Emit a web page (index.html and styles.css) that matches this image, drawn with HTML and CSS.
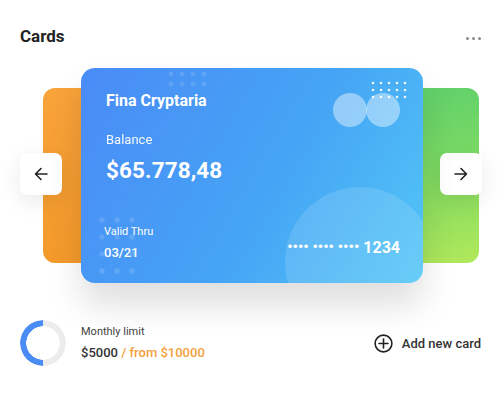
FILE: index.html
```html
<!DOCTYPE html>
<html>
<head>
<meta charset="utf-8">
<link rel="stylesheet" href="styles.css">
</head>
<body>
<div class="widget">
  <div class="header">
    <h2 class="title">Cards</h2>
    <div class="more"><span></span><span></span><span></span></div>
  </div>
  <div class="carousel">
    <div class="back back-orange"></div>
    <div class="back back-green"></div>
    <div class="card">
      <svg class="deco" width="342" height="215" viewBox="0 0 342 215">
        <circle cx="279" cy="194" r="75" fill="#ffffff" fill-opacity="0.13"/>
        <circle cx="269" cy="42" r="17" fill="#ffffff" fill-opacity="0.42"/>
        <circle cx="302" cy="42" r="17" fill="#ffffff" fill-opacity="0.42"/>
        <g fill="#ffffff" fill-opacity="0.9">
          <circle cx="292" cy="15" r="1.3"/><circle cx="300" cy="15" r="1.3"/><circle cx="308" cy="15" r="1.3"/><circle cx="316" cy="15" r="1.3"/><circle cx="324" cy="15" r="1.3"/>
          <circle cx="292" cy="22" r="1.3"/><circle cx="300" cy="22" r="1.3"/><circle cx="308" cy="22" r="1.3"/><circle cx="316" cy="22" r="1.3"/><circle cx="324" cy="22" r="1.3"/>
          <circle cx="292" cy="29" r="1.3"/><circle cx="300" cy="29" r="1.3"/><circle cx="308" cy="29" r="1.3"/><circle cx="316" cy="29" r="1.3"/><circle cx="324" cy="29" r="1.3"/>
        </g>
        <g fill="#ffffff" fill-opacity="0.12">
          <circle cx="90" cy="6" r="2.5"/><circle cx="101" cy="6" r="2.5"/><circle cx="112" cy="6" r="2.5"/><circle cx="123" cy="6" r="2.5"/>
          <circle cx="90" cy="16" r="2.5"/><circle cx="101" cy="16" r="2.5"/><circle cx="112" cy="16" r="2.5"/><circle cx="123" cy="16" r="2.5"/>
        </g>
        <g fill="#ffffff" fill-opacity="0.14">
          <circle cx="21" cy="152" r="2.7"/><circle cx="36" cy="152" r="2.7"/><circle cx="51" cy="152" r="2.7"/>
          <circle cx="21" cy="169" r="2.7"/><circle cx="36" cy="169" r="2.7"/><circle cx="51" cy="169" r="2.7"/>
          <circle cx="21" cy="186" r="2.7"/><circle cx="36" cy="186" r="2.7"/><circle cx="51" cy="186" r="2.7"/>
          <circle cx="21" cy="203" r="2.7"/><circle cx="36" cy="203" r="2.7"/><circle cx="51" cy="203" r="2.7"/>
        </g>
      </svg>
      <div class="card-top">
        <div class="holder">Fina Cryptaria</div>
        <div class="label">Balance</div>
        <div class="amount">$65.778,48</div>
      </div>
      <div class="card-bottom">
        <div class="valid">
          <div class="valid-label">Valid Thru</div>
          <div class="valid-date">03/21</div>
        </div>
        <div class="number"><span class="mask">•••• •••• ••••</span> 1234</div>
      </div>
    </div>
    <button class="arrow arrow-left" aria-label="Previous">
      <svg width="14" height="14" viewBox="0 0 14 14"><path d="M13 7H1.5M7 1.5L1.5 7L7 12.5" fill="none" stroke="#222" stroke-width="1.6" stroke-linecap="round" stroke-linejoin="round"/></svg>
    </button>
    <button class="arrow arrow-right" aria-label="Next">
      <svg width="14" height="14" viewBox="0 0 14 14"><path d="M1 7H12.5M7 1.5L12.5 7L7 12.5" fill="none" stroke="#222" stroke-width="1.6" stroke-linecap="round" stroke-linejoin="round"/></svg>
    </button>
  </div>
  <div class="footer">
    <div class="limit">
      <div class="donut"></div>
      <div class="limit-text">
        <div class="limit-label">Monthly limit</div>
        <div class="limit-value"><b>$5000</b> <span class="from">/ from $10000</span></div>
      </div>
    </div>
    <div class="add">
      <svg width="19" height="19" viewBox="0 0 19 19"><circle cx="9.5" cy="9.5" r="8.4" fill="none" stroke="#222" stroke-width="1.6"/><path d="M9.5 5V14M5 9.5H14" stroke="#222" stroke-width="1.6" stroke-linecap="round"/></svg>
      <span>Add new card</span>
    </div>
  </div>
</div>
</body>
</html>
```
FILE: styles.css
```css
* { box-sizing: border-box; }
html, body { margin: 0; padding: 0; background: #ffffff; }
body { font-family: Roboto, "Liberation Sans", Arial, sans-serif; color: #222; }
.widget { width: 500px; height: 400px; padding: 24px 18px 0 20px; }
.header { display: flex; justify-content: space-between; align-items: center; height: 24px; }
.title { margin: 0; font-size: 17px; font-weight: 700; color: #222; }
.more { display: flex; gap: 3px; padding-right: 1px; margin-top: 4px; }
.more span { width: 3px; height: 3px; border-radius: 50%; background: #8a8a8a; }
.carousel { display: grid; margin-top: 20px; height: 215px; }
.carousel > * { grid-area: 1 / 1; }
.back { align-self: center; height: 175px; border-radius: 12px; }
.back-orange { justify-self: start; margin-left: 23px; width: 120px; background: linear-gradient(160deg, #f8a33b, #f39827); }
.back-green { justify-self: end; margin-right: 3px; width: 120px; background: linear-gradient(170deg, #5ccf6c 0%, #7fdb62 50%, #b1e85a 100%); }
.card { position: relative; justify-self: start; margin-left: 61px; width: 342px; height: 215px; border-radius: 14px; overflow: hidden; background: linear-gradient(120deg, #4a8bf6 0%, #45a4f5 55%, #52c6f6 100%); box-shadow: 0 22px 34px rgba(0,0,0,0.13); color: #fff; display: flex; flex-direction: column; justify-content: space-between; padding: 22px 23px 22px 23px; }
.deco { position: absolute; left: 0; top: 0; }
.card-top, .card-bottom { position: relative; }
.card-top { padding-left: 2px; }
.holder { font-size: 16px; font-weight: 700; line-height: 22px; }
.label { font-size: 13px; line-height: 16px; margin-top: 20px; opacity: 0.95; }
.amount { font-size: 22.5px; font-weight: 700; line-height: 28px; margin-top: 8px; letter-spacing: 0.1px; }
.card-bottom { display: flex; justify-content: space-between; align-items: flex-end; }
.valid-label { font-size: 11px; line-height: 14px; }
.valid-date { font-size: 13px; font-weight: 500; line-height: 16px; margin-top: 6px; }
.number { font-size: 16px; font-weight: 700; line-height: 22px; margin-bottom: 2px; }
.mask { font-size: 15px; letter-spacing: 0; vertical-align: 1px; }
.arrow { align-self: center; width: 42px; height: 42px; border: none; border-radius: 7px; background: #fff; box-shadow: 0 6px 22px rgba(0,0,0,0.09); display: flex; align-items: center; justify-content: center; padding: 0; margin-top: -3px; }
.arrow-left { justify-self: start; }
.arrow-right { justify-self: end; }
.footer { display: flex; justify-content: space-between; align-items: center; margin-top: 37px; }
.limit { display: flex; align-items: center; gap: 15px; }
.donut { width: 46px; height: 46px; border-radius: 50%; background: conic-gradient(#ececec 0 50%, #4a8cf4 50% 100%); -webkit-mask: radial-gradient(circle, transparent 16.5px, #000 17px); mask: radial-gradient(circle, transparent 16.5px, #000 17px); }
.limit-label { font-size: 11px; color: #444; line-height: 14px; }
.limit-value { font-size: 13px; line-height: 16px; margin-top: 6px; }
.limit-value b { font-weight: 500; color: #333; }
.from { color: #f4a03c; font-weight: 500; }
.add { display: flex; align-items: center; gap: 9px; font-size: 13px; font-weight: 500; color: #333; padding-right: 1px; }
```
